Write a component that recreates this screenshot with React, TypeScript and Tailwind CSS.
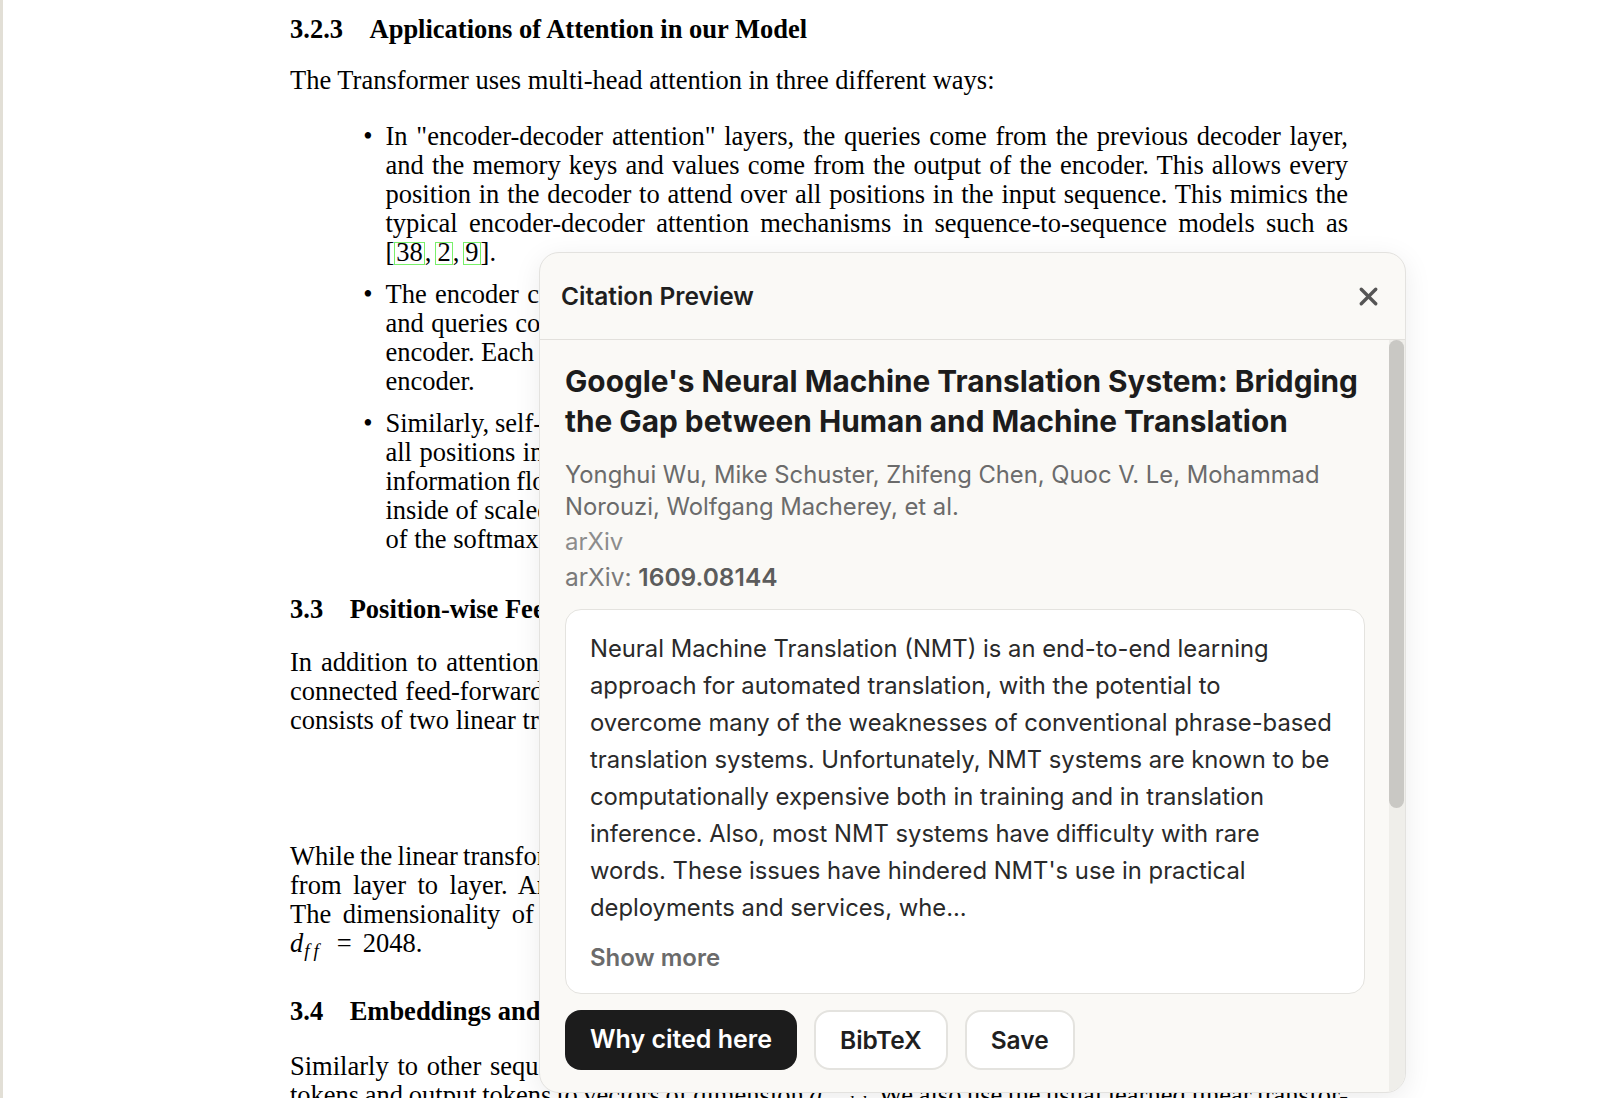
import { X } from "lucide-react";
import type { ReactNode } from "react";

// one justified line of the paper text; the last line of a paragraph stays left
function Line({ children, last }: { children: ReactNode; last?: boolean }) {
  return (
    <div className={last ? "text-left" : "text-justify [text-align-last:justify] [word-spacing:-4px]"}>
      {children}
    </div>
  );
}

function Heading({ num, children, className }: { num: string; children: ReactNode; className?: string }) {
  return (
    <div className={"font-bold " + (className ?? "")}>
      <span className="mr-[1em]">{num}</span>
      {children}
    </div>
  );
}

function Bullet({ children, className }: { children: ReactNode; className?: string }) {
  return (
    <div className={"flex " + (className ?? "")}>
      <div className="w-[95.5px] shrink-0 pr-[13px] text-right">•</div>
      <div className="min-w-0 flex-1">{children}</div>
    </div>
  );
}

function Cite({ n }: { n: string }) {
  return (
    <span className="inline-block border border-[#79f06a] px-[1px] pb-[2px] leading-[19px]">{n}</span>
  );
}

const abstract = [
  "Neural Machine Translation (NMT) is an end-to-end learning",
  "approach for automated translation, with the potential to",
  "overcome many of the weaknesses of conventional phrase-based",
  "translation systems. Unfortunately, NMT systems are known to be",
  "computationally expensive both in training and in translation",
  "inference. Also, most NMT systems have difficulty with rare",
  "words. These issues have hindered NMT's use in practical",
  "deployments and services, whe...",
];

function CitationPreview() {
  return (
    <div className="absolute left-[539px] top-[252px] flex h-[841px] w-[867px] flex-col overflow-hidden rounded-[20px] border border-[#e3e2df] bg-[#faf9f6] font-['Inter',sans-serif] shadow-[0_6px_28px_rgba(0,0,0,0.08)]">
      <div className="flex h-[87px] shrink-0 items-center justify-between border-b border-[#e2e0dc] pl-[21px] pr-[21px]">
        <h2 className="text-[24.5px] font-semibold text-[#1f1f1f]">Citation Preview</h2>
        <button className="flex h-[32px] w-[32px] items-center justify-center text-[#555]">
          <X size={29} strokeWidth={2.8} />
        </button>
      </div>

      <div className="flex min-h-0 flex-1">
        <div className="min-w-0 flex-1 overflow-hidden pl-[25px] pr-[24px] pt-[21px]">
          <h1 className="text-[29.8px] font-bold leading-[40px] text-[#1c1c1c]">
            Google's Neural Machine Translation System: Bridging the Gap between Human and Machine Translation
          </h1>
          <p className="mt-[18px] text-[23.8px] leading-[32px] text-[#6b6b6b]">
            Yonghui Wu, Mike Schuster, Zhifeng Chen, Quoc V. Le, Mohammad Norouzi, Wolfgang Macherey, et al.
          </p>
          <p className="mt-[2px] text-[24px] leading-[34px] text-[#8c8c8c]">arXiv</p>
          <p className="text-[24.5px] leading-[36px] text-[#7a7a7a]">
            arXiv: <span className="font-semibold text-[#5c5c5c]">1609.08144</span>
          </p>

          <div className="mt-[14px] rounded-[16px] border border-[#e4e3df] bg-white px-[24px] pt-[20px] pb-[19px]">
            <div className="text-[23.8px] leading-[37px] text-[#2a2a2a]">
              {abstract.map((l) => (
                <div key={l} className="whitespace-nowrap">
                  {l}
                </div>
              ))}
            </div>
            <button className="mt-[15px] text-[24px] font-semibold leading-[33px] text-[#6b6b6b]">Show more</button>
          </div>

          <div className="mt-[16px] flex gap-[17px]">
            <button className="h-[60px] rounded-[16px] bg-[#1c1c1c] px-[25px] text-[25px] font-semibold text-white">
              Why cited here
            </button>
            <button className="h-[60px] rounded-[16px] border-2 border-[#e4e3df] bg-white px-[24px] text-[24.5px] font-semibold text-[#1f1f1f]">
              BibTeX
            </button>
            <button className="h-[60px] rounded-[16px] border-2 border-[#e4e3df] bg-white px-[24px] text-[24.5px] font-semibold text-[#1f1f1f]">
              Save
            </button>
          </div>
        </div>

        {/* scroll track */}
        <div className="w-[16px] shrink-0 bg-[#efeeea]">
          <div className="h-[468px] w-[15px] rounded-full bg-[#c9c8c4]" />
        </div>
      </div>
    </div>
  );
}

export default function App() {
  return (
    <div className="relative h-[1098px] w-full overflow-hidden bg-white">
      <div className="flex h-full">
        <div className="w-[3px] shrink-0 bg-[#e2dfd6]" />
        <main className="w-[1345px] shrink-0 pl-[287px] pt-[15px] font-['Liberation_Serif','Times_New_Roman',serif] text-[26.5px] leading-[29px] text-black">
          <Heading num="3.2.3">Applications of Attention in our Model</Heading>
          <p className="mt-[22px]">The Transformer uses multi-head attention in three different ways:</p>

          <Bullet className="mt-[27px]">
            <Line>In "encoder-decoder attention" layers, the queries come from the previous decoder layer,</Line>
            <Line>and the memory keys and values come from the output of the encoder. This allows every</Line>
            <Line>position in the decoder to attend over all positions in the input sequence. This mimics the</Line>
            <Line>typical encoder-decoder attention mechanisms in sequence-to-sequence models such as</Line>
            <Line last>
              [<Cite n="38" />
              <span className="mr-[4px]">,</span>
              <Cite n="2" />
              <span className="mr-[4px]">,</span>
              <Cite n="9" />
              ].
            </Line>
          </Bullet>

          <Bullet className="mt-[13px]">
            <Line>The encoder contains self-attention layers. In a self-attention layer all of the keys, values</Line>
            <Line>and queries come from the same place, in this case, the output of the previous layer in the</Line>
            <Line>encoder. Each position in the encoder can attend to all positions in the previous layer of the</Line>
            <Line last>encoder.</Line>
          </Bullet>

          <Bullet className="mt-[13px]">
            <Line>Similarly, self-attention layers in the decoder allow each position in the decoder to attend to</Line>
            <Line>all positions in the decoder up to and including that position. We need to prevent leftward</Line>
            <Line>information flow in the decoder to preserve the auto-regressive property. We implement this</Line>
            <Line>inside of scaled dot-product attention by masking out (setting to −∞) all values in the input</Line>
            <Line last>of the softmax which correspond to illegal connections. See Figure 2.</Line>
          </Bullet>

          <Heading num="3.3" className="mt-[41px]">
            Position-wise Feed-Forward Networks
          </Heading>
          <div className="mt-[24px]">
            <Line>In addition to attention sub-layers, each of the layers in our encoder and decoder contains a fully</Line>
            <Line>connected feed-forward network, which is applied to each position separately and identically. This</Line>
            <Line last>consists of two linear transformations with a ReLU activation in between.</Line>
          </div>

          <div className="flex h-[107px] items-center">
            <div className="flex-1 text-center">
              FFN(<i>x</i>) = max(0, <i>xW</i>
              <sub>1</sub> + <i>b</i>
              <sub>1</sub>)<i>W</i>
              <sub>2</sub> + <i>b</i>
              <sub>2</sub>
            </div>
            <div>(2)</div>
          </div>

          <div>
            <Line>While the linear transformations are the same across different positions, they use different parameters</Line>
            <Line>from layer to layer. Another way of describing this is as two convolutions with kernel size 1.</Line>
            <Line>
              The dimensionality of input and output is <i>d</i>
              <sub className="text-[18px] italic">model</sub> = 512, and the inner-layer has dimensionality
            </Line>
            <Line last>
              <i>d</i>
              <sub className="pl-[1px] pr-[3px] text-[19px] italic tracking-[4px]">ff</sub>
              <span className="mx-[11px]">=</span>2048.
            </Line>
          </div>

          <Heading num="3.4" className="mt-[39px]">
            Embeddings and Softmax
          </Heading>
          <div className="mt-[26px]">
            <Line>Similarly to other sequence transduction models, we use learned embeddings to convert the input</Line>
            <Line>
              tokens and output tokens to vectors of dimension <i>d</i>
              <sub className="text-[18px] italic">model</sub>. We also use the usual learned linear transfor-
            </Line>
          </div>
        </main>
      </div>
      <CitationPreview />
    </div>
  );
}
